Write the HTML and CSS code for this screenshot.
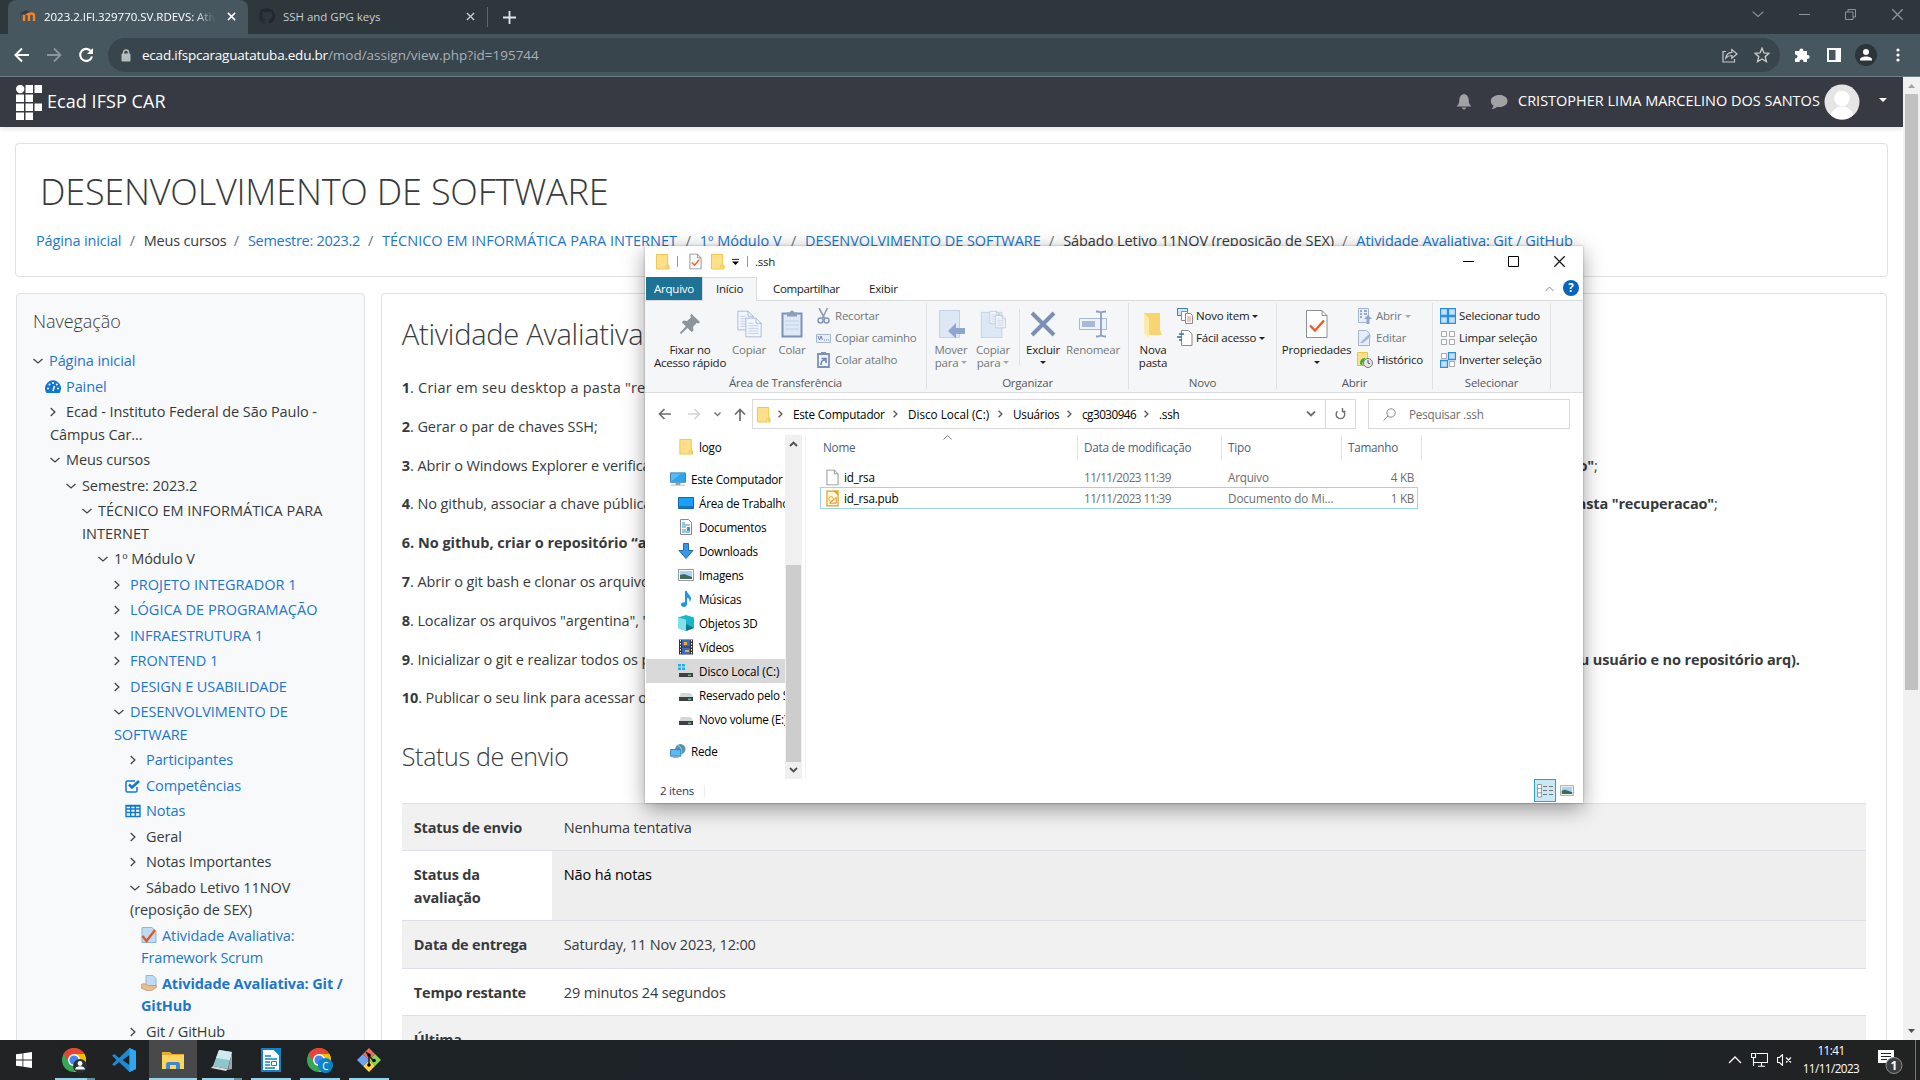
FILE: index.html
```html
<!DOCTYPE html>
<html lang="pt-BR">
<head>
<meta charset="utf-8">
<title>Atividade Avaliativa: Git / GitHub</title>
<link rel="stylesheet" href="styles.css">
</head>
<body>
<svg class="defs" width="0" height="0">
  <symbol id="x" viewBox="0 0 10 10"><path d="M1 1l8 8M9 1l-8 8" stroke="currentColor" fill="none"/></symbol>
  <symbol id="down" viewBox="0 0 10 10"><path d="M.5 3l4.500 4L9.500 3" stroke="currentColor" fill="none"/></symbol>
  <symbol id="right" viewBox="0 0 10 10"><path d="M.7 1l4.200 4-4.200 4" stroke="currentColor" fill="none"/></symbol>
  <symbol id="folder" viewBox="0 0 16 18"><path d="M1.500 1.500h12v11l1.500 1v3.500h-13.500z" fill="#ffe08a" stroke="#edc347"/><path d="M11.500 16.500v-3h2v3" fill="#fff0b8" stroke="#edc347"/></symbol>
  <symbol id="doc" viewBox="0 0 14 18"><path d="M1 1h8l4 4v12H1z" fill="#fff" stroke="#8f8f8f"/><path d="M9 1v4h4" fill="none" stroke="#8f8f8f"/></symbol>
  <symbol id="drive" viewBox="0 0 16 16"><path d="M3 5h10l2 4H1z" fill="#d5d7da"/><path d="M1 9h14v4H1z" fill="#3c3f43"/><path d="M10 10.500h3v1.500h-3z" fill="#48dd5a"/></symbol>
  <symbol id="pic" viewBox="0 0 16 12"><path d="M.5.5h15v11H.5z" fill="#fff" stroke="#9a9a9a"/><path d="M2 2h12v8H2z" fill="#a9d2f5"/><path d="M2 6l4-1 8 3v2H2z" fill="#3a6b5b"/></symbol>
  <symbol id="chrome" viewBox="0 0 24 24"><circle cx="12" cy="12" r="12" fill="#34a853"/><path d="M1.600 6A12 12 0 0 1 22.400 6H12l-5 8.500z" fill="#ea4335"/><path d="M22.400 6A12 12 0 0 1 12 24l5.500-9L12 6z" fill="#fbbc05"/><circle cx="12" cy="12" r="6" fill="#fff"/><circle cx="12" cy="12" r="4.600" fill="#4285f4"/></symbol>
  <symbol id="page" viewBox="0 0 20 24"><path d="M1 1h12l6 6v16H1z" fill="#f2f6fc" stroke="#a3b4d0"/><path d="M13 1v6h6" fill="none" stroke="#a3b4d0"/><path d="M4 7h6M4 10h12M4 13h12M4 16h12M4 19h12" stroke="#bccae2"/></symbol>
</svg>

<div class="chrome">
  <div class="tabs">
    <div class="tab active">
      <svg class="fav" width="16" height="16" viewBox="0 0 16 16"><path d="M4 13V8a2.500 2.500 0 0 1 5 0v5M9 13V8a2.500 2.500 0 0 1 5 0v5" fill="none" stroke="#f0852d" stroke-width="2.400"/><path d="M0 5.500l6-3 3 1-4 3zM.5 5.500V11" fill="#3b3b3b" stroke="#3b3b3b" stroke-width=".6"/></svg>
      <span class="tab-title fade">2023.2.IFI.329770.SV.RDEVS: Ativ</span>
      <svg class="tab-x" width="9" height="9" stroke-width="1.700"><use href="#x"/></svg>
    </div>
    <div class="tab">
      <svg class="fav" width="16" height="16" viewBox="0 0 16 16"><path fill="#24292f" d="M8 0C3.580 0 0 3.580 0 8c0 3.540 2.290 6.530 5.470 7.590.4.070.55-.17.55-.38v-1.490c-2.010.37-2.530-.49-2.690-.94-.09-.23-.48-.94-.82-1.130-.28-.15-.68-.52-.01-.53.63-.01 1.080.58 1.230.82.720 1.210 1.870.87 2.330.66.070-.52.280-.87.510-1.070-1.780-.2-3.640-.89-3.640-3.950 0-.87.310-1.590.82-2.150-.08-.2-.36-1.020.08-2.120 0 0 .67-.21 2.200.82a7.600 7.600 0 0 1 4 0c1.530-1.040 2.200-.82 2.200-.82.44 1.100.16 1.920.08 2.120.51.560.82 1.270.82 2.150 0 3.070-1.870 3.750-3.650 3.950.29.25.54.730.54 1.480v2.200c0 .21.150.46.550.38A8 8 0 0 0 8 0z"/></svg>
      <span class="tab-title">SSH and GPG keys</span>
      <svg class="tab-x" width="9" height="9" stroke-width="1.500"><use href="#x"/></svg>
    </div>
    <div class="new-tab"><svg width="13" height="13" viewBox="0 0 13 13"><path d="M6.500 0v13M0 6.500h13" stroke="#e3e6e8" stroke-width="1.800"/></svg></div>
    <div class="win-btns">
      <svg width="12" height="12"><use href="#down"/></svg>
      <svg width="11" height="11" viewBox="0 0 11 11"><path d="M0 5.500h11" stroke="currentColor"/></svg>
      <svg width="11" height="11" viewBox="0 0 11 11"><path d="M.5 3h7.500v7.500H.5zM3 3V.5h7.500V8H8" fill="none" stroke="currentColor"/></svg>
      <svg width="13" height="13"><use href="#x"/></svg>
    </div>
  </div>
  <div class="toolbar">
    <svg width="16" height="16" viewBox="0 0 16 16"><path d="M15 8H2M8 1.500L1.500 8 8 14.500" fill="none" stroke="#fff" stroke-width="2"/></svg>
    <svg width="16" height="16" viewBox="0 0 16 16"><path d="M1 8h13M8 1.500L14.500 8 8 14.500" fill="none" stroke="#8b979c" stroke-width="1.800"/></svg>
    <svg width="16" height="16" viewBox="0 0 16 16"><path d="M13.200 4.500A6 6 0 1 0 14 9.500" fill="none" stroke="#fff" stroke-width="2.100"/><path d="M15 1v6H9z" fill="#fff"/></svg>
    <div class="omnibox">
      <svg width="10" height="13" viewBox="0 0 10 13"><path d="M1 5h8v7H1z" fill="#b5bcc0" stroke="#b5bcc0"/><path d="M2.500 5V3.500a2.500 2.500 0 0 1 5 0V5" fill="none" stroke="#b5bcc0" stroke-width="1.500"/></svg>
      <span class="url"><b>ecad.ifspcaraguatatuba.edu.br</b>/mod/assign/view.php?id=195744</span>
      <svg width="16" height="15" viewBox="0 0 16 15"><path d="M4 3.500H1v10.500h11.500v-3M3.800 10c.5-3.500 2.700-5.500 6-5.700V1.500L15 6l-5.200 4.200V7.500C7.300 7.500 5.300 8.300 3.800 10z" fill="none" stroke="#c3c9cc" stroke-width="1.200"/></svg>
      <svg width="16" height="16" viewBox="0 0 16 16"><path d="M8 1.200l2 4.700 5 .4-3.800 3.300 1.200 5L8 12l-4.400 2.600 1.200-5L1 6.300l5-.4z" fill="none" stroke="#c3c9cc" stroke-width="1.400"/></svg>
    </div>
    <div class="ext">
      <svg width="16" height="16" viewBox="0 0 16 16"><path d="M1 4h4.500a2 2 0 1 1 3.800 0H13v4a2 2 0 1 1 0 3.800V15H9.300a1.900 1.900 0 1 0-3.600 0H1v-3.700a1.900 1.900 0 1 0 0-3.600z" fill="#fff"/></svg>
      <svg width="14" height="14" viewBox="0 0 14 14"><path d="M0 0h14v14H0z" fill="#fff"/><path d="M2 2h6.500v10H2z" fill="#46575f"/></svg>
      <svg width="22" height="22" viewBox="0 0 22 22"><circle cx="11" cy="11" r="11" fill="#2b353a"/><circle cx="11" cy="8" r="3" fill="#fff"/><path d="M5 16.500v-1c0-4 12-4 12 0v1z" fill="#fff"/></svg>
      <svg width="4" height="14" viewBox="0 0 4 14"><circle cx="2" cy="2" r="1.600" fill="#fff"/><circle cx="2" cy="7" r="1.600" fill="#fff"/><circle cx="2" cy="12" r="1.600" fill="#fff"/></svg>
    </div>
  </div>
</div>

<div class="viewport">
  <div class="page">
    <header class="navbar">
      <svg width="26" height="35" viewBox="0 0 26 35" fill="#fff"><circle cx="4.200" cy="4" r="4.200"/><path d="M9.500 0H17v8H9.500zM18.500 0H26v8h-7.500zM0 9.500h8V17H0zM9.500 9.500H17V17H9.500zM0 18.500h8V26H0zM9.500 18.500H17V26H9.500zM18.500 18.500H26V26h-7.500zM0 27.500h8V35H0zM9.500 27.500H17V35H9.500z"/></svg>
      <span class="brand">Ecad IFSP CAR</span>
      <svg class="bell" width="16" height="18" viewBox="0 0 16 18"><path d="M8 1c3.300.7 4.700 3 4.700 6 0 3.500 1 5 2.800 6.500H.5C2.300 12 3.300 10.500 3.300 7c0-3 1.400-5.300 4.700-6zM6 14.500h4a2 2 0 0 1-4 0z" fill="#a0a2a6"/></svg>
      <svg class="bubble" width="18" height="15" viewBox="0 0 18 15"><path d="M9.500 0C14 0 17.500 2.500 17.500 6s-3.500 6-8 6c-.8 0-1.500 0-2.200-.2C5.500 13.500 3.500 14 1.500 14c1-.8 1.800-2 2-3.500C1.500 9.500.8 7.800.8 6c0-3.500 4-6 8.700-6z" fill="#a0a2a6"/></svg>
      <span class="user">CRISTOPHER LIMA MARCELINO DOS SANTOS</span>
      <svg class="avatar" width="36" height="36" viewBox="0 0 36 36"><clipPath id="c"><circle cx="18" cy="18" r="17.500"/></clipPath><g clip-path="url(#c)"><path d="M0 0h36v36H0z" fill="#e5e5e5"/><circle cx="18" cy="14.500" r="7.800" fill="#fff"/><path d="M6 36c0-18 24-18 24 0z" fill="#fff"/></g></svg>
      <svg width="8" height="4" viewBox="0 0 8 4"><path d="M0 0h8L4 4z" fill="#fff"/></svg>
    </header>

    <section class="card head">
      <h1>DESENVOLVIMENTO DE SOFTWARE</h1>
      <nav class="crumbs">
        <a>Página inicial</a><i>/</i><span>Meus cursos</span><i>/</i><a>Semestre: 2023.2</a><i>/</i><a>TÉCNICO EM INFORMÁTICA PARA INTERNET</a><i>/</i><a>1º Módulo V</a><i>/</i><a>DESENVOLVIMENTO DE SOFTWARE</a><i>/</i><span>Sábado Letivo 11NOV (reposição de SEX)</span><i>/</i><a>Atividade Avaliativa: Git / GitHub</a>
      </nav>
    </section>

    <div class="cols">
      <aside class="card nav">
        <h5>Navegação</h5>
        <ul>
          <li class="l0"><svg class="tw"><use href="#down"/></svg><a>Página inicial</a></li>
          <li class="l1 ico"><svg class="fa" width="16" height="14" viewBox="0 0 16 14"><path d="M1.500 13a8 8 0 1 1 13 0z" fill="#1177d1"/><circle cx="3" cy="8.500" r="1" fill="#fff"/><circle cx="4.500" cy="4.500" r="1" fill="#fff"/><circle cx="8" cy="3" r="1" fill="#fff"/><circle cx="11.800" cy="4.500" r="1" fill="#fff"/><circle cx="13" cy="8.500" r="1" fill="#fff"/><path d="M8 11l1.500-5" stroke="#fff" stroke-width="1.500"/></svg><a>Painel</a></li>
          <li class="l1"><svg class="tw"><use href="#right"/></svg>Ecad - Instituto Federal de São Paulo -<br>Câmpus Car...</li>
          <li class="l1"><svg class="tw"><use href="#down"/></svg>Meus cursos</li>
          <li class="l2"><svg class="tw"><use href="#down"/></svg>Semestre: 2023.2</li>
          <li class="l3 caps"><svg class="tw"><use href="#down"/></svg>TÉCNICO EM INFORMÁTICA PARA<br>INTERNET</li>
          <li class="l4"><svg class="tw"><use href="#down"/></svg>1º Módulo V</li>
          <li class="l5 caps"><svg class="tw"><use href="#right"/></svg><a>PROJETO INTEGRADOR 1</a></li>
          <li class="l5 caps"><svg class="tw"><use href="#right"/></svg><a>LÓGICA DE PROGRAMAÇÃO</a></li>
          <li class="l5 caps"><svg class="tw"><use href="#right"/></svg><a>INFRAESTRUTURA 1</a></li>
          <li class="l5 caps"><svg class="tw"><use href="#right"/></svg><a>FRONTEND 1</a></li>
          <li class="l5"><svg class="tw"><use href="#right"/></svg><a>DESIGN E USABILIDADE</a></li>
          <li class="l5"><svg class="tw"><use href="#down"/></svg><a>DESENVOLVIMENTO DE<br>SOFTWARE</a></li>
          <li class="l6"><svg class="tw"><use href="#right"/></svg><a>Participantes</a></li>
          <li class="l6 ico"><svg class="fa" width="16" height="14" viewBox="0 0 16 14"><path d="M12 8v3.500a1.500 1.500 0 0 1-1.500 1.500h-8A1.500 1.500 0 0 1 1 11.500v-8A1.500 1.500 0 0 1 2.500 2H10" fill="none" stroke="#1177d1" stroke-width="1.500"/><path d="M4 5.500l3 3L14 2" fill="none" stroke="#1177d1" stroke-width="2.600"/></svg><a>Competências</a></li>
          <li class="l6 ico"><svg class="fa" width="16" height="14" viewBox="0 0 16 14"><path d="M1 1.500h14v11H1zM1 5h14M1 8.500h14M5.700 2v11M10.300 2v11M1 2h14" fill="none" stroke="#1177d1" stroke-width="1.400"/></svg><a>Notas</a></li>
          <li class="l6"><svg class="tw"><use href="#right"/></svg>Geral</li>
          <li class="l6"><svg class="tw"><use href="#right"/></svg>Notas Importantes</li>
          <li class="l6"><svg class="tw"><use href="#down"/></svg>Sábado Letivo 11NOV<br>(reposição de SEX)</li>
          <li class="l7"><svg class="act" width="16" height="16" viewBox="0 0 16 16"><path d="M1 .5h10l4 4v11H1z" fill="#bfdcf5" stroke="#8bb6de"/><path d="M1.500 9l4 5L14 3" fill="none" stroke="#e2582a" stroke-width="2.400"/></svg><a>Atividade Avaliativa:<br>Framework Scrum</a></li>
          <li class="l7 bold"><svg class="act" width="16" height="16" viewBox="0 0 16 16"><path d="M5 .5h7l3 3v9H5z" fill="#bfdcf5" stroke="#8bb6de"/><path d="M0 9.500c3-2 6 0 7 1l8 0c1 0 .5 2-1 3l-4 2.200c-3 .5-7-1-10-2.700z" fill="#e9bd8c" stroke="#b98555" stroke-width=".6"/></svg><a>Atividade Avaliativa: Git /<br>GitHub</a></li>
          <li class="l6"><svg class="tw"><use href="#right"/></svg>Git / GitHub</li>
        </ul>
      </aside>

      <main class="card main">
        <h2>Atividade Avaliativa</h2>
        <p class="wide"><b>1</b>. Criar em seu desktop a pasta "re</p>
        <p><b>2</b>. Gerar o par de chaves SSH;</p>
        <p class="t3"><span><b>3</b>. Abrir o Windows Explorer e verifica</span><span><b>ao"</b>;</span></p>
        <p class="t4"><span><b>4</b>. No github, associar a chave pública</span><span><b>pasta "recuperacao"</b>;</span></p>
        <p class="strong">6. No github, criar o repositório “a</p>
        <p><b>7</b>. Abrir o git bash e clonar os arquivos</p>
        <p><b>8</b>. Localizar os arquivos "argentina", "</p>
        <p class="t9"><span><b>9</b>. Inicializar o git e realizar todos os p</span><b>seu usuário e no repositório arq).</b></p>
        <p><b>10</b>. Publicar o seu link para acessar o</p>
        <h3>Status de envio</h3>
        <table>
          <tr><th>Status de envio</th><td>Nenhuma tentativa</td></tr>
          <tr class="graded"><th>Status da avaliação</th><td>Não há notas</td></tr>
          <tr><th>Data de entrega</th><td>Saturday, 11 Nov 2023, 12:00</td></tr>
          <tr><th>Tempo restante</th><td>29 minutos 24 segundos</td></tr>
          <tr><th>Última modificação</th><td></td></tr>
        </table>
      </main>
    </div>
  </div>
  <div class="scroll"><svg width="7" height="4" viewBox="0 0 7 4"><path d="M0 4h7L3.500 0z" fill="#a3a3a3"/></svg><div class="thumb"></div><svg class="end" width="7" height="4" viewBox="0 0 7 4"><path d="M0 0h7L3.500 4z" fill="#505050"/></svg></div>
</div>

<div class="explorer">
  <div class="ex-title">
    <svg width="15" height="17"><use href="#folder"/></svg><i class="bar"></i>
    <svg class="q1" width="13" height="17" viewBox="0 0 14 18"><use href="#doc"/><path d="M3 10l3 3 5-6" fill="none" stroke="#f15a22" stroke-width="1.600"/></svg>
    <svg class="q2" width="15" height="17"><use href="#folder"/></svg>
    <svg class="q3" width="7" height="8" viewBox="0 0 8 8"><path d="M0 1h8" stroke="#000"/><path d="M0 3.500h8L4 7.500z"/></svg><i class="bar b2"></i>
    <span>.ssh</span>
    <div class="ex-btns">
      <svg width="11" height="11" viewBox="0 0 11 11"><path d="M0 5.500h11" stroke="#000"/></svg>
      <svg width="11" height="11" viewBox="0 0 11 11"><path d="M.5.500h10v10H.5z" fill="none" stroke="#000"/></svg>
      <svg width="13" height="13"><use href="#x"/></svg>
    </div>
  </div>
  <div class="ex-tabs">
    <span class="file">Arquivo</span><span class="home">Início</span><span class="t-share">Compartilhar</span><span class="t-view">Exibir</span>
    <svg class="up" width="9" height="6" viewBox="0 0 9 6"><path d="M.5 5l4-4 4 4" fill="none" stroke="#888"/></svg>
    <span class="help">?</span>
  </div>
  <div class="ribbon">
    <div class="group g1">
      <div class="btns">
        <div class="big w78"><svg width="22" height="22" viewBox="0 0 22 22"><path d="M12.500 1l8.500 8-1.500 1.500-2-.5-3.500 4 .5 3.500-2 1.500-4-4-6.500 6-1.200-1 6-6.700-4-4L4.500 7.500 8 8l4-3.500L11.200 2.500z" fill="#8b959b"/></svg><span>Fixar no<br>Acesso rápido</span></div>
        <div class="big w40 off"><svg class="cp" width="26" height="28" viewBox="0 0 26 28"><use href="#page" width="17" height="21"/><use href="#page" x="8" y="7" width="17" height="21"/></svg><span>Copiar</span></div>
        <div class="big w46 off"><svg width="22" height="28" viewBox="0 0 22 28"><path d="M1.500 3.500h19v23h-19z" fill="#dfe9f6" stroke="#7d92b8" stroke-width="2"/><path d="M6 2.500h3a2 2 0 0 1 4 0h3v4H6z" fill="#8d9cb8"/><path d="M4 11h14M4 15h14M4 19h14" stroke="#c3d2e8"/></svg><span>Colar</span></div>
        <div class="smalls">
          <div class="sm off"><svg width="15" height="16" viewBox="0 0 15 16"><path d="M3 0l6 11M11.500 0L6 11" stroke="#8f9bb0" stroke-width="1.600"/><circle cx="4.500" cy="12.500" r="2.500" fill="none" stroke="#7f97c0" stroke-width="1.500"/><circle cx="10.500" cy="12.500" r="2.500" fill="none" stroke="#7f97c0" stroke-width="1.500"/></svg>Recortar</div>
          <div class="sm off"><svg width="15" height="16" viewBox="0 0 15 16"><path d="M.5 4.500h14v8H.5z" fill="#e8eff9" stroke="#a7b8d4"/><path d="M2 6l1.500 4L5 6l1.500 4M8 10h1M10 10h1M12 10h1" fill="none" stroke="#6f84ad"/></svg>Copiar caminho</div>
          <div class="sm off"><svg width="15" height="16" viewBox="0 0 15 16"><path d="M2 2h11v13H2z" fill="#eef3fa" stroke="#7d92b8" stroke-width="1.800"/><path d="M5 0h5v3H5z" fill="#7d92b8"/><path d="M5 13c0-4 1-5 4-5M5.500 6.500H10V11" fill="none" stroke="#6f84ad" stroke-width="1.600"/></svg>Colar atalho</div>
        </div>
      </div>
      <div class="gl">Área de Transferência</div>
    </div>
    <div class="group g2">
      <div class="btns">
        <div class="big w44 off"><svg class="mv" width="28" height="28" viewBox="0 0 28 28"><path d="M2.500.500h20v27h-20z" fill="#dde7f6" stroke="#c2d1ea"/><path d="M11 21l8-8v5h9v6h-9v4.500z" fill="#8fa5cc"/></svg><span>Mover<br>para <em></em></span></div>
        <div class="big w40 off"><svg width="28" height="30" viewBox="0 0 28 30"><path d="M1.500 2.500h22v27h-22z" fill="#dde7f6" stroke="#c2d1ea"/><use href="#page" x="10" y="0" width="12" height="16"/><use href="#page" x="16" y="4" width="12" height="17"/></svg><span>Copiar<br>para <em></em></span></div>
        <i class="sep"></i>
        <div class="big w44"><svg width="26" height="28" viewBox="0 0 26 28"><path d="M2 3l22 22M24 3L2 25" stroke="#7d8fb5" stroke-width="4"/></svg><span>Excluir<br><em class="k"></em></span></div>
        <div class="big w56 off"><svg width="28" height="28" viewBox="0 0 28 28"><path d="M.5 8.500h27v11H.5z" fill="#eef3fb" stroke="#a7b8d4"/><path d="M3 11h13v6H3z" fill="#a9b9d8"/><path d="M22 2v24M17 1.500c3 0 5 .5 5 2 0-1.500 2-2 5-2M17 26.500c3 0 5-.5 5-2 0 1.500 2 2 5 2" fill="none" stroke="#8c9fc4" stroke-width="1.800"/></svg><span>Renomear</span></div>
      </div>
      <div class="gl">Organizar</div>
    </div>
    <div class="group g3">
      <div class="btns">
        <div class="big w40"><svg width="20" height="28" viewBox="0 0 20 28"><path d="M1 3h16v17l2 5H6z" fill="#f9d472"/><path d="M1 3l5 5v20l-5-5z" fill="#ffe9a8"/></svg><span>Nova<br>pasta</span></div>
        <div class="smalls">
          <div class="sm"><svg width="16" height="16" viewBox="0 0 16 16"><path d="M.5.500h10v7H.5z" fill="#cfe6f5" stroke="#3f7fa8"/><path d="M4.500 3.500h6v9h-6z" fill="#fff" stroke="#8a8a8a"/><path d="M8.500 5.500h5l2 2v8h-7z" fill="#fff" stroke="#8a8a8a"/><path d="M10 9h4M10 11h4M10 13h4" stroke="#e08a8a"/></svg>Novo item <em class="k"></em></div>
          <div class="sm"><svg width="16" height="16" viewBox="0 0 16 16"><path d="M4.500.500h7l3.500 3.500v11.500H4.500z" fill="#fff" stroke="#8a8a8a"/><path d="M2 4h5M0 7h5M2 10h3" stroke="#2a6fb0" stroke-width="1.500"/></svg>Fácil acesso <em class="k"></em></div>
        </div>
      </div>
      <div class="gl">Novo</div>
    </div>
    <div class="group g4">
      <div class="btns">
        <div class="big w73"><svg width="22" height="28" viewBox="0 0 22 28"><path d="M.5.500h15.500l5 5V27.500H.5z" fill="#fff" stroke="#8f8f8f"/><path d="M16 .5v5h5" fill="none" stroke="#8f8f8f"/><path d="M4 15.500l5 5L18 10.500" fill="none" stroke="#f15a22" stroke-width="2.400"/></svg><span>Propriedades<br><em class="k"></em></span></div>
        <div class="smalls">
          <div class="sm off"><svg width="15" height="16" viewBox="0 0 15 16"><path d="M1.500.500h10v14h-10z" fill="#eaf0f9" stroke="#a3b4d0"/><path d="M3 3h2M3 6h2M3 9h2M7 3h3M7 6h3" stroke="#7d92b8" stroke-width="1.500"/><path d="M11 7l4 4h-2.500v5h-3v-5H7z" fill="#8fa5cc"/></svg>Abrir <em></em></div>
          <div class="sm off"><svg width="15" height="16" viewBox="0 0 15 16"><path d="M1.500.500h8l3 3v12h-11z" fill="#e6eef9" stroke="#a3b4d0"/><path d="M3 13L12 4l2 2-8 7z" fill="#a3b7d8"/></svg>Editar</div>
          <div class="sm"><svg width="16" height="16" viewBox="0 0 16 16"><path d="M.5.500h10v13H.5z" fill="#ffe08a" stroke="#edc347"/><circle cx="11" cy="11" r="4.500" fill="#e8e8e8" stroke="#777"/><path d="M11 8v3l2 1" fill="none" stroke="#555"/><path d="M3 12c0-4 2-6 5-6l-1 3c-2 1-2 3-1 5z" fill="#2cb03a"/></svg>Histórico</div>
        </div>
      </div>
      <div class="gl">Abrir</div>
    </div>
    <div class="group g5">
      <div class="smalls">
        <div class="sm"><svg width="16" height="16" viewBox="0 0 16 16"><path d="M.5.500h7v7h-7zM8.500.500h7v7h-7zM.5 8.500h7v7h-7zM8.500 8.500h7v7h-7z" fill="#c2e2fb" stroke="#2a8fe0" stroke-width="1.300"/></svg>Selecionar tudo</div>
        <div class="sm"><svg width="16" height="16" viewBox="0 0 16 16"><path d="M1.500 1.500h5v5h-5zM9.500 1.500h5v5h-5zM1.500 9.500h5v5h-5zM9.500 9.500h5v5h-5z" fill="#fff" stroke="#a8a8a8"/></svg>Limpar seleção</div>
        <div class="sm"><svg width="16" height="16" viewBox="0 0 16 16"><path d="M1.500 1.500h5v5h-5zM9.500 9.500h5v5h-5z" fill="#fff" stroke="#a8a8a8"/><path d="M8.500.500h7v7h-7zM.5 8.500h7v7h-7z" fill="#c2e2fb" stroke="#2a8fe0" stroke-width="1.300"/></svg>Inverter seleção</div>
      </div>
      <div class="gl">Selecionar</div>
    </div>
  </div>
  <div class="address">
    <div class="arrows">
      <svg width="13" height="12" viewBox="0 0 13 12"><path d="M13 6H1.500M6.500 1l-5 5 5 5" fill="none" stroke="#6d6d6d" stroke-width="1.700"/></svg>
      <svg width="13" height="12" viewBox="0 0 13 12"><path d="M0 6h11.500M6.500 1l5 5-5 5" fill="none" stroke="#d2d2d2" stroke-width="1.500"/></svg>
      <svg class="sv" width="7" height="5" viewBox="0 0 7 5"><path d="M.5.500l3 3 3-3" fill="none" stroke="#777" stroke-width="1.500"/></svg>
      <svg width="12" height="13" viewBox="0 0 12 13"><path d="M6 13V1.500M1 6.500l5-5 5 5" fill="none" stroke="#6d6d6d" stroke-width="1.700"/></svg>
    </div>
    <div class="path">
      <svg width="15" height="17"><use href="#folder"/></svg>
      <svg class="sl"><use href="#right"/></svg><span class="p1">Este Computador</span>
      <svg class="sl"><use href="#right"/></svg><span class="p2">Disco Local (C:)</span>
      <svg class="sl"><use href="#right"/></svg><span class="p3">Usuários</span>
      <svg class="sl"><use href="#right"/></svg><span class="p4">cg3030946</span>
      <svg class="sl"><use href="#right"/></svg><span>.ssh</span>
      <svg class="dd" width="10" height="6" viewBox="0 0 10 6"><path d="M1 .5l4 4 4-4" fill="none" stroke="#6d6d6d" stroke-width="1.800"/></svg>
      <div class="refresh"><svg width="11" height="12" viewBox="0 0 11 12"><path d="M8.500 3.200A4.300 4.300 0 1 1 3.500 2.600M3.500 0v3.500H.5" transform="matrix(-1 0 0 1 11 0)" fill="none" stroke="#6d6d6d" stroke-width="1.400"/></svg></div>
    </div>
    <div class="search"><svg width="13" height="13" viewBox="0 0 13 13"><circle cx="8" cy="5" r="4.200" fill="none" stroke="#888"/><path d="M5 8l-4.500 4.500" stroke="#888"/></svg><span>Pesquisar .ssh</span></div>
  </div>
  <div class="ex-body">
    <div class="tree">
      <div class="tr first"><svg width="16" height="17" viewBox="0 0 16 18"><use href="#folder"/></svg>logo</div>
      <div class="tr root"><svg width="17" height="16" viewBox="0 0 17 16"><path d="M.5 1.500h16v10H.5z" fill="#55bdf5" stroke="#3a7eae"/><path d="M1 11L12 2h4v9z" fill="#2ea3ee"/><path d="M6 12h5v2H6zM1 14h15v1H1z" fill="#8da5ba"/></svg>Este Computador</div>
      <div class="tr"><svg width="16" height="16" viewBox="0 0 16 16"><path d="M.5 2.500h15v11H.5z" fill="#18a0fb" stroke="#1268a8"/><path d="M1 12h14" stroke="#0d4f85"/></svg>Área de Trabalho</div>
      <div class="tr"><svg width="16" height="16" viewBox="0 0 16 16"><path d="M2.500.500h8l3 3v12h-11z" fill="#fff" stroke="#8a8a8a"/><path d="M4 4h3M4 6h8M4 8h4M4 11h4M4 13h8" stroke="#2a94d8"/><path d="M9 8h3v4H9z" fill="#4a92c5"/></svg>Documentos</div>
      <div class="tr"><svg width="16" height="16" viewBox="0 0 16 16"><path d="M5.500.500h5v7h4.500L8 15.500 1 7.500h4.500z" fill="#3a96e8" stroke="#2468ae"/></svg>Downloads</div>
      <div class="tr"><svg width="16" height="12"><use href="#pic"/></svg>Imagens</div>
      <div class="tr"><svg width="16" height="16" viewBox="0 0 16 16"><path d="M7 0h2c0 3 4 4 4 8 0 1-.5 2-1.500 3 .5-3-1-4-2.500-4.500V13c0 4-6.500 3.500-6 .5.400-2 2.500-2.500 4-2z" fill="#1b93f0"/></svg>Músicas</div>
      <div class="tr"><svg width="16" height="16" viewBox="0 0 16 16"><path d="M0 2.500L8 0l8 2.500v10.500L8 16l-8-3z" fill="#1cb5c9"/><path d="M0 2.500l8 2V16l-8-3z" fill="#7fe3ec"/><path d="M8 9l8 4-8 3z" fill="#0b7a8e"/></svg>Objetos 3D</div>
      <div class="tr"><svg width="16" height="16" viewBox="0 0 16 16"><path d="M1 .5h14v15H1z" fill="#333"/><path d="M4 1h8v6.500H4zM4 8.500h8V15H4z" fill="#3e67c9"/><path d="M6 3h3v3H6zM7 11h4v2H7z" fill="#e8b02a"/><path d="M2.500 1v14M13.500 1v14" stroke="#fff" stroke-dasharray="1.500 1.500"/></svg>Vídeos</div>
      <div class="tr sel"><svg width="16" height="16" viewBox="0 0 16 16"><use href="#drive" y="1"/><path d="M0 1h3v2.500H0zM4 1h3v2.500H4zM0 4.500h3V7H0zM4 4.500h3V7H4z" fill="#1eb3ee"/></svg>Disco Local (C:)</div>
      <div class="tr"><svg width="16" height="16"><use href="#drive" y="1"/></svg>Reservado pelo Sistema</div>
      <div class="tr"><svg width="16" height="16"><use href="#drive" y="1"/></svg>Novo volume (E:)</div>
      <div class="tr root"><svg width="17" height="16" viewBox="0 0 17 16"><circle cx="11" cy="6" r="5.500" fill="#5793b5"/><path d="M8 2c3 1 5 4 4 9" stroke="#b5d8e8" fill="none"/><path d="M.5 6.500h11v7H.5z" fill="#55bdf5" stroke="#3a7eae"/><path d="M3 15h6" stroke="#8da5ba"/></svg>Rede</div>
    </div>
    <div class="tscroll"><svg width="9" height="6" viewBox="0 0 9 6"><path d="M1 5l3.500-3.500L8 5" fill="none" stroke="#505050" stroke-width="1.900"/></svg><div class="tthumb"></div><svg width="9" height="6" viewBox="0 0 9 6"><path d="M1 1l3.500 3.500L8 1" fill="none" stroke="#505050" stroke-width="1.900"/></svg></div>
    <div class="files">
      <div class="fr fh"><span>Nome<svg class="sort" width="9" height="5" viewBox="0 0 9 5"><path d="M.5 4.500l4-4 4 4" fill="none" stroke="#777"/></svg></span><span>Data de modificação</span><span>Tipo</span><span class="h-size">Tamanho</span></div>
      <div class="fr"><span class="nm"><svg width="13" height="17" viewBox="0 0 14 18"><use href="#doc"/></svg>id_rsa</span><span class="dt">11/11/2023 11:39</span><span>Arquivo</span><span class="sz">4 KB</span></div>
      <div class="fr focus"><span class="nm"><svg width="13" height="17" viewBox="0 0 14 18"><path d="M1 1h8l4 4v12H1z" fill="#fff7df" stroke="#dca613" stroke-width="1.300"/><path d="M8 0h5.500v5.500z" fill="#e0ab1c"/><circle cx="5.500" cy="9.500" r="2.500" fill="none" stroke="#dca613"/><path d="M4 14h7V8z" fill="none" stroke="#e0872a"/></svg>id_rsa.pub</span><span class="dt">11/11/2023 11:39</span><span class="ty">Documento do Mi...</span><span class="sz">1 KB</span></div>
    </div>
  </div>
  <div class="status"><span>2 itens</span>
    <div class="view on"><svg width="17" height="14" viewBox="0 0 17 14"><path d="M.5.500h4v12.500h-4zM.5 4.600h4M.5 8.800h4" fill="#fff" stroke="#999"/><path d="M6 2.500h4M12 2.500h4M6 6.500h4M12 6.500h4M6 10.500h4M12 10.500h4" stroke="#777"/></svg></div>
    <svg width="14" height="11"><use href="#pic"/></svg>
  </div>
</div>

<div class="taskbar">
  <div class="tb start"><svg width="16" height="16" viewBox="0 0 16 16"><path d="M0 2.300L6.500 1.400v6.200H0zM7.300 1.300L16 0v7.600H7.300zM0 8.400h6.500v6.200L0 13.700zM7.300 8.400H16V16l-8.700-1.300z" fill="#fff"/></svg></div>
  <div class="tb run split"><svg width="26" height="25" viewBox="0 0 26 25"><use href="#chrome" width="24" height="24"/><circle cx="18" cy="18" r="7" fill="#263238"/><circle cx="18" cy="15.500" r="2.400" fill="#fff"/><path d="M13 21.500c0-4.500 10-4.500 10 0z" fill="#fff"/></svg></div>
  <div class="tb"><svg width="24" height="24" viewBox="0 0 24 24"><path d="M17.500 0L24 3v18l-6.500 3L7 14l-4.500 4L0 16.500 4.500 12 0 7.500 2.500 6 7 10z" fill="#1f8ad2"/><path d="M17.500 7v10L10.500 12z" fill="#1e2225"/><path d="M17.500 0L24 3v18l-6.500 3z" fill="#30a6ee"/></svg></div>
  <div class="tb run cur"><svg width="22" height="19" viewBox="0 0 22 19"><path d="M0 1h8l2 2h12v15H0z" fill="#e8a92c"/><path d="M0 4h22v14H0z" fill="#ffd55f"/><path d="M4 18v-5c0-1 1-2 2-2h10c1 0 2 1 2 2v5h-4v-4H8v4z" fill="#3e88d0"/></svg></div>
  <div class="tb run split"><svg width="22" height="22" viewBox="0 0 22 22"><path d="M8 1l13 2-4 17L2 17z" fill="#8fc6cd"/><path d="M8 1l13 2-2 8L5 9z" fill="#cfeaf0"/><path d="M2 17l15 3-2 2-15-3z" fill="#d8d8d8"/><path d="M21 3v17l-4 1z" fill="#a5a5a5"/></svg></div>
  <div class="tb run"><svg width="20" height="24" viewBox="0 0 20 24"><path d="M1 1h12l6 6v16H1z" fill="#fff" stroke="#1383c4" stroke-width="2"/><path d="M13 0h7v7z" fill="#1383c4"/><path d="M4 8h6M4 11h12M4 14h5M4 17h5M4 20h10" stroke="#1383c4" stroke-width="1.500"/><path d="M10.500 13.500h5v4h-5z" fill="none" stroke="#1383c4"/></svg></div>
  <div class="tb run"><svg width="26" height="25" viewBox="0 0 26 25"><use href="#chrome" width="24" height="24"/><circle cx="18.500" cy="17.500" r="7.500" fill="#0a84c8"/><text x="18.500" y="21.500" text-anchor="middle" class="cbadge">C</text></svg></div>
  <div class="tb run"><svg width="24" height="24" viewBox="0 0 24 24"><path d="M12 0l6 6-6 6-6-6z" fill="#f3685f"/><path d="M18 6l6 6-6 6-6-6z" fill="#86d355"/><path d="M12 12l6 6-6 6-6-6z" fill="#ffd23f"/><path d="M6 6l6 6-6 6-6-6z" fill="#6ba4f2"/><path d="M9 4l3 3v10M12 8l5 5" stroke="#222" stroke-width="1.500" fill="none"/><circle cx="12" cy="7" r="1.800"/><circle cx="12" cy="17" r="1.800"/><circle cx="17" cy="12.500" r="1.800"/></svg></div>
  <div class="tray">
    <svg width="14" height="8" viewBox="0 0 14 8"><path d="M1 7l6-6 6 6" fill="none" stroke="#fff" stroke-width="1.300"/></svg>
    <svg width="17" height="14" viewBox="0 0 17 14"><path d="M5.500.500h11v9h-11M.5.500h4v4h-4zM2.500 4.500V13M2.500 9.500h4M10.500 10v3M7 13.300h7" fill="none" stroke="#fff" stroke-width="1.100"/></svg>
    <svg width="15" height="12" viewBox="0 0 15 12"><path d="M.5 3.500h2l3-3v11l-3-3h-2zM9 3.500l5 5M14 3.500l-5 5" fill="none" stroke="#fff" stroke-width="1.100"/></svg>
    <div class="clock">11:41<br>11/11/2023</div>
    <svg class="note" width="26" height="26" viewBox="0 0 26 26"><path d="M1 1h16v13h-5l-3 3v-3H1z" fill="#fff"/><path d="M4 4.500h10M4 7.500h10M4 10.500h6" stroke="#222"/><circle cx="17" cy="16.500" r="8" fill="#3b3e40" stroke="#8a8c8d"/><text x="17" y="21" text-anchor="middle" class="nbadge">1</text></svg>
    <i class="peek"></i>
  </div>
</div>
</body>
</html>
```
FILE: styles.css
```css
* { box-sizing: border-box; }
body { margin: 0; width: 1920px; height: 1080px; overflow: hidden; position: relative; font-family: "Open Sans", "Noto Sans", sans-serif; background: #fff; }
svg { display: block; flex: none; }
svg text { font-family: "Open Sans", sans-serif; }
.defs { position: absolute; }
i, em { font-style: normal; }

/* browser */
.chrome { height: 77px; background: #46575f; border-bottom: 1px solid #6f7f87; }
.tabs { height: 34px; background: #2d373c; display: flex; align-items: stretch; padding-left: 8px; font-size: 11.5px; letter-spacing: -.03px; color: #c8cdd0; }
.tab { display: flex; align-items: center; width: 239px; padding: 0 12px 2px 11px; }
.tab.active { width: 240px; background: #46575f; border-radius: 8px 8px 0 0; color: #fff; padding-left: 12px; }
.tab-title { flex: 1; margin-left: 8px; white-space: nowrap; overflow: hidden; }
.fade { -webkit-mask-image: linear-gradient(90deg, #000 150px, transparent 172px); mask-image: linear-gradient(90deg, #000 150px, transparent 172px); }
.new-tab { display: flex; align-items: center; padding-left: 15px; border-left: 1px solid #5d676c; margin: 7px 0 7px; }
.win-btns { margin-left: auto; display: flex; align-items: center; gap: 35px; padding: 0 16px 6px 0; color: #8d9598; }
.toolbar { height: 42px; display: flex; align-items: center; padding-left: 14px; }
.toolbar > svg { margin-right: 16px; }
.omnibox { width: 1672px; height: 34px; border-radius: 17px; background: #38454c; display: flex; align-items: center; padding: 0 10px 0 13px; margin-left: -2px; }
.omnibox svg:nth-of-type(n+2) { margin-left: 16px; }
.url { flex: 1; margin-left: 11px; font-size: 13.5px; letter-spacing: -.01px; color: #a9b1b5; }
.url b { font-weight: 400; color: #fff; letter-spacing: -.22px; }
.ext { display: flex; align-items: center; margin-left: 14px; }
.ext svg:nth-child(2) { margin-left: 17px; }
.ext svg:nth-child(3) { margin-left: 14px; }
.ext svg:nth-child(4) { margin-left: 19px; }

/* page */
.viewport { display: flex; height: 963px; overflow: hidden; }
.page { width: 1903px; height: 963px; overflow: hidden; font-size: 14.5px; line-height: 22.5px; letter-spacing: -.09px; color: #373a3c; }
.navbar { height: 50px; background: #373a42; display: flex; align-items: center; padding: 0 16px; box-shadow: 0 2px 5px rgba(60, 20, 60, .12); color: #fff; }
.brand { font-size: 18px; margin: 0 auto 2px 5px; letter-spacing: .06px; }
.bubble { margin-left: 18px; }
.user { margin: 0 3px 1px 10px; width: 303px; white-space: nowrap; letter-spacing: 0; }
.avatar { margin-right: 19px; }
.navbar svg:last-child { margin-bottom: 4px; }
.card { border: 1px solid #dee0e2; border-radius: 4px; }
.head { margin: 16px 15px 0 15px; height: 134px; padding: 26px 20px; }
h1, h2, h3, h5 { margin: 0; font-weight: 300; }
h1 { font-size: 36px; line-height: 44px; letter-spacing: -.2px; padding-left: 4px; }
.crumbs { display: flex; margin-top: 16px; white-space: nowrap; }
.crumbs i { width: 22.700px; text-align: center; color: #6c757d; letter-spacing: 0; }
.crumbs > :nth-child(1) { width: 85px; letter-spacing: -.16px; }
.crumbs > :nth-child(3) { width: 81.500px; letter-spacing: -.2px; }
.crumbs > :nth-child(5) { width: 111.500px; letter-spacing: -.28px; }
.crumbs > :nth-child(7) { width: 295px; letter-spacing: 0; }
.crumbs > :nth-child(9) { width: 82.500px; letter-spacing: 0; }
.crumbs > :nth-child(11) { width: 235.500px; letter-spacing: -.06px; }
.crumbs > :nth-child(13) { width: 270.500px; letter-spacing: -.06px; }
.crumbs > :nth-child(15) { letter-spacing: -.05px; }
a { color: #1b76cf; }
.cols { display: flex; align-items: flex-start; gap: 16px; margin: 16px 16px 0; }
.nav { width: 349px; height: 800px; background: #f8f9fb; padding: 15px 16px; }
h5 { font-size: 18px; line-height: 24px; margin-bottom: 17px; letter-spacing: -.05px; }
ul { list-style: none; margin: 0; padding: 0; }
li { margin-bottom: 3px; white-space: nowrap; }
.caps { letter-spacing: .01px; }
.l1 { padding-left: 17px; } .l2 { padding-left: 33px; } .l3 { padding-left: 49px; } .l4 { padding-left: 65px; } .l5 { padding-left: 81px; } .l6 { padding-left: 97px; } .l7 { padding-left: 108px; }
.tw { display: inline-block; width: 10px; height: 10px; margin-right: 6px; color: #444; stroke-width: 1.300; }
.fa { display: inline-block; vertical-align: -2px; margin: 0 5px 0 -5px; }
.act { display: inline-block; vertical-align: -2px; margin-right: 5px; }
.bold, .strong, b, th { font-weight: 700; letter-spacing: -.13px; }
.strong { letter-spacing: -.02px; }
.main { width: 1507px; height: 800px; padding: 22px 20px; }
h2 { font-size: 29px; line-height: 36px; margin-bottom: 25px; letter-spacing: -.25px; }
p { margin: 0 0 16.300px; white-space: nowrap; }
.wide { letter-spacing: .23px; }
.t3, .t4, .t9 { display: flex; justify-content: space-between; }
.t3 { width: 1196px; } .t4 { width: 1316px; } .t9 { width: 1398px; }
h3 { font-size: 25px; line-height: 32px; margin: 30px 0 31px; letter-spacing: -.35px; }
table { width: 1464px; border-collapse: collapse; table-layout: fixed; }
th, td { padding: 13px 12px 11px; text-align: left; vertical-align: top; border-top: 1px solid #dcdfe6; }
td { letter-spacing: -.16px; }
th { width: 150px; letter-spacing: -.2px; }
tr:nth-child(odd) { background: #f1f1f1; }
.graded td { background: #eee; color: #000; }
.scroll { width: 17px; background: #f1f1f1; display: flex; flex-direction: column; align-items: center; padding: 7px 0; }
.thumb { width: 13px; height: 596px; margin-top: 6px; background: #c1c1c1; }
.end { margin-top: auto; }

/* file explorer window */
.explorer { position: absolute; left: 645px; top: 246px; width: 938px; height: 557px; background: #fff; box-shadow: 0 6px 20px rgba(0, 0, 0, .38), 0 0 2px rgba(0, 0, 0, .3); font-size: 11.5px; letter-spacing: -.22px; color: #1a1a1a; white-space: nowrap; }
.ex-title { height: 31px; display: flex; align-items: center; padding-left: 10px; }
.bar { width: 1px; height: 11px; background: #999; margin-left: 7px; }
.q1 { margin-left: 11px; } .q2 { margin-left: 8px; } .q3 { margin-left: 7px; } .b2 { margin-left: 8px; }
.ex-title span { margin-left: 7px; }
.ex-btns { margin-left: auto; display: flex; align-items: center; gap: 34px; padding: 0 17px 1px 0; }
.ex-tabs { height: 23px; display: flex; line-height: 24px; position: relative; }
.file { width: 56px; margin-left: 1px; text-align: center; background: #1e7296; color: #fff; }
.home { width: 55px; height: 24px; text-align: center; background: #f5f6f7; border: 1px solid #dadbdc; border-bottom: 0; line-height: 22px; z-index: 1; }
.t-share { margin-left: 16px; width: 68px; letter-spacing: -.36px; } .t-view { margin-left: 28px; }
.up { margin: 9px 9px 0 auto; }
.help { width: 16px; height: 16px; margin: 3px 4px 0 0; border-radius: 50%; background: #0a63bf; color: #fff; font-weight: 700; line-height: 16px; text-align: center; letter-spacing: 0; }
.ribbon { height: 93px; background: #f5f6f7; border: solid #dadbdc; border-width: 1px 0; display: flex; }
.group { position: relative; height: 86px; margin-top: 2px; border-right: 1px solid #dfe1e3; display: flex; flex-direction: column; }
.g1 { width: 282px; padding-left: 6px; } .g2 { width: 202px; padding-left: 2px; } .g3 { width: 148px; padding-left: 4px; } .g4 { width: 156px; padding-left: 3px; } .g5 { width: 118px; }
.btns { display: flex; height: 72px; }
.big { display: flex; flex-direction: column; align-items: center; text-align: center; line-height: 13px; }
.big > svg { height: 28px; padding: 7px 0 5px; box-sizing: content-box; }
.cp { margin-left: 2px; }
.off { color: #737679; }
.w40 { width: 40px; } .w44 { width: 44px; } .w46 { width: 46px; } .w56 { width: 56px; } .w73 { width: 73px; } .w78 { width: 78px; }
em { display: inline-block; border: 3px solid transparent; border-top: 3px solid #a8a8a8; border-bottom: 0; vertical-align: 3px; }
em.k { border-top-color: #222; }
.sep { width: 1px; height: 56px; background: #dfe1e3; margin: 6px 1px 0 6px; }
.smalls { display: flex; flex-direction: column; padding: 2px 0 0 1px; height: 72px; }
.sm { height: 22px; line-height: 22px; display: flex; align-items: center; }
.sm svg { margin-right: 4px; }
.sm em { margin-left: 3px; }
.g3 .smalls, .g4 .smalls { padding-left: 4px; } .g5 .smalls { padding-left: 7px; }
.g3 .sm svg, .g5 .sm svg { margin-right: 3px; }
.g5 .sm { letter-spacing: -.18px; }
.gl { position: absolute; left: 0; right: 0; top: 73px; line-height: 13px; text-align: center; color: #55585b; }
.address { height: 42px; display: flex; padding: 4px 0 8px 13px; align-items: center; font-size: 11.7px; }
.address { padding: 6px 0 6px 13px; }
.arrows { display: flex; align-items: center; width: 94px; }
.arrows svg + svg { margin-left: 17px; } .arrows svg.sv { margin-left: 13px; } .arrows .sv + svg { margin-left: 13px; }
.path { width: 604px; height: 30px; border: 1px solid #d9d9d9; display: flex; align-items: center; padding-left: 3px; color: #000; }
.sl { width: 8px; height: 8px; margin: 0 7px 0 7px; color: #555; stroke-width: 1.600; }
.p1 { width: 93px; } .p2 { width: 83px; letter-spacing: 0; } .p3 { width: 47px; } .p4 { width: 55px; letter-spacing: -.5px; }
.dd { margin-left: auto; margin-right: 9px; }
.refresh { width: 30px; height: 28px; border-left: 1px solid #d9d9d9; display: flex; align-items: center; justify-content: center; }
.search { width: 202px; height: 30px; margin-left: 12px; border: 1px solid #d9d9d9; display: flex; align-items: center; padding-left: 14px; color: #6d6d6d; }
.search span { margin-left: 13px; }
.ex-body { display: flex; height: 344px; color: #000; font-size: 11.7px; }
.tree { width: 140px; overflow: hidden; padding-left: 1px; }
.tr { height: 24px; display: flex; align-items: center; padding: 0 0 1px 32px; }
.tr svg { width: 16px; margin-right: 5px; }
.tr.first { margin-bottom: 8px; }
.tr.root { padding-left: 24px; }
.tr.root:last-child { margin-top: 8px; }
.tr.sel { background: #d9d9d9; letter-spacing: -.05px; }
.tscroll { width: 17px; background: #f0f0f0; display: flex; flex-direction: column; align-items: center; padding: 6px 0; }
.tthumb { width: 15px; height: 197px; margin: 118px 0 auto; background: #cdcdcd; }
.files { margin-left: 3px; border-left: 1px solid #f0f0f0; padding-left: 14px; }
.fr { display: grid; grid-template-columns: 258px 144px 120px 80px; width: 598px; height: 22px; align-items: center; border: 1px solid transparent; }
.fr span { padding-left: 5px; color: #6d6d6d; }
.fr .nm { display: flex; align-items: center; gap: 5px; color: #000; }
.fh { height: 25px; margin-bottom: 6px; border: 0; width: 602px; }
.fh span { height: 25px; line-height: 25px; padding-left: 6px; border-right: 1px solid #e5e5e5; color: #4c607a; position: relative; }
.fh span:first-child { padding-left: 3px; }
.sort { position: absolute; left: 123px; top: 0; }
.fr .dt { letter-spacing: -.5px; } .fr .ty { letter-spacing: -.08px; }
.fr .sz { text-align: right; padding: 0 5px 0 0; width: 76px; letter-spacing: -.3px; }
.focus { border-color: #99d1ff; margin-top: -1px; }
.status { height: 24px; display: flex; align-items: center; padding: 0 9px 1px 15px; color: #1e395b; }
.status span { margin-right: auto; padding-right: 10px; border-right: 1px solid #eee; line-height: 12px; }
.view { width: 22px; height: 23px; margin-right: 4px; display: flex; align-items: center; justify-content: center; background: #cbe8f6; border: 1px solid #26a0da; }

/* taskbar */
.taskbar { height: 40px; background: linear-gradient(90deg, #212324, #1d2225 25%, #1d222b 42%, #1c2328 60%, #1e2326 85%, #222); display: flex; }
.tb { width: 40px; margin-right: 9px; display: flex; align-items: center; justify-content: center; border-bottom: 2px solid transparent; padding-top: 2px; }
.start { width: 48px; margin-right: 7px; }
.run { border-bottom-color: #90d5f0; }
.cur { width: 48px; margin-right: 5px; background: #47494b; }
.tb:nth-child(3) { margin-right: 5px; }
.split { border-image: linear-gradient(90deg, #90d5f0 78%, #5f8fa5 78%) 1; }
.cbadge { font-size: 10px; fill: #fff; } .nbadge { font-size: 12px; font-weight: 700; fill: #fff; }
.tray { margin-left: auto; display: flex; align-items: center; color: #fff; }
.tray svg { margin-right: 9px; }
.clock { width: 60px; text-align: center; font-size: 11.700px; line-height: 18px; letter-spacing: -.55px; margin: -2px 16px 0 0; }
.tray .note { margin-right: 12px; margin-top: 4px; }
.peek { width: 1px; height: 40px; background: #777; margin-right: 4px; }
```
